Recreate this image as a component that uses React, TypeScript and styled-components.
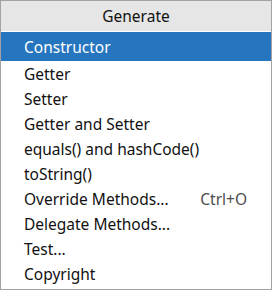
import { FC } from 'react';
import styled, { createGlobalStyle } from 'styled-components';

const GlobalStyle = createGlobalStyle`
  html, body {
    margin: 0;
    padding: 0;
    background: #ffffff;
  }
  body {
    font-family: 'Noto Sans', 'Open Sans', sans-serif;
  }
`;

const Popup = styled.div`
  width: 272px;
  height: 290px;
  box-sizing: border-box;
  border: 1px solid #a3a3a3;
  background: #ffffff;
  display: flex;
  flex-direction: column;
`;

const Header = styled.div`
  height: 30px;
  background: #e6e6e6;
  display: flex;
  align-items: center;
  justify-content: center;
  font-size: 15.5px;
  color: #111111;
`;

const List = styled.ul`
  list-style: none;
  margin: 0;
  padding: 1px 0 0;
`;

const Item = styled.li<{ $selected?: boolean }>`
  height: ${(p) => (p.$selected ? 29 : 25)}px;
  display: flex;
  align-items: center;
  padding-left: 23px;
  padding-right: 24px;
  font-size: 15.5px;
  color: ${(p) => (p.$selected ? '#ffffff' : '#111111')};
  background: ${(p) => (p.$selected ? '#2675bf' : 'transparent')};
`;

const Label = styled.span`
  flex: 1;
`;

const Shortcut = styled.span`
  color: #4d4d4d;
`;

type Entry = { label: string; shortcut?: string };

const entries: Entry[] = [
  { label: 'Constructor' },
  { label: 'Getter' },
  { label: 'Setter' },
  { label: 'Getter and Setter' },
  { label: 'equals() and hashCode()' },
  { label: 'toString()' },
  { label: 'Override Methods...', shortcut: 'Ctrl+O' },
  { label: 'Delegate Methods...' },
  { label: 'Test...' },
  { label: 'Copyright' },
];

const App: FC = () => {
  return (
    <>
      <GlobalStyle />
      <Popup>
        <Header>Generate</Header>
        <List>
          {entries.map(({ label, shortcut }, i) => (
            <Item key={label} $selected={i === 0}>
              <Label>{label}</Label>
              {shortcut && <Shortcut>{shortcut}</Shortcut>}
            </Item>
          ))}
        </List>
      </Popup>
    </>
  );
};

export default App;
